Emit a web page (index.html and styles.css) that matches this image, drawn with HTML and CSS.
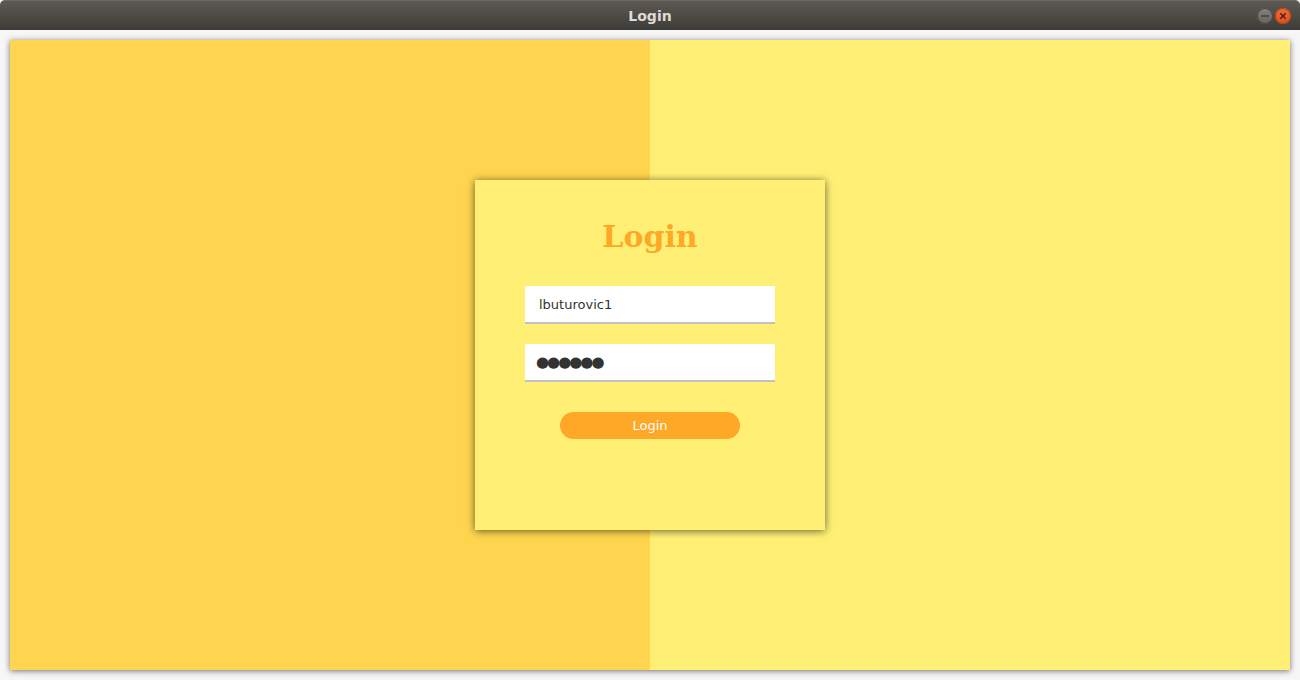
FILE: index.html
```html
<!DOCTYPE html>
<html lang="en">
<head>
<meta charset="utf-8">
<title>Login</title>
<link rel="stylesheet" href="styles.css">
</head>
<body>
<div class="window">
  <header class="titlebar">
    <span class="title">Login</span>
    <div class="controls">
      <span class="ctl ctl-min">
        <svg width="16" height="16" viewBox="0 0 16 16"><line x1="4" y1="8" x2="12" y2="8" stroke="#3b3a36" stroke-width="1.3"/></svg>
      </span>
      <span class="ctl ctl-close">
        <svg width="16" height="16" viewBox="0 0 16 16"><path d="M5.3 5.3 L10.7 10.7 M10.7 5.3 L5.3 10.7" stroke="#3d2115" stroke-width="1.3" fill="none"/></svg>
      </span>
    </div>
  </header>
  <div class="frame">
    <main class="panel">
      <div class="halves">
        <div class="half half-left"></div>
        <div class="half half-right"></div>
      </div>
      <section class="card">
        <h1 class="card-title">Login</h1>
        <div class="field">lbuturovic1</div>
        <div class="field field-pass">●●●●●●</div>
        <button class="btn">Login</button>
      </section>
    </main>
  </div>
</div>
</body>
</html>
```
FILE: styles.css
```css
html, body {
  margin: 0;
  padding: 0;
  width: 1300px;
  height: 680px;
  overflow: hidden;
  background: #f7f7f7;
  font-family: "DejaVu Sans", "Liberation Sans", sans-serif;
}

.window {
  display: flex;
  flex-direction: column;
  height: 680px;
}

.titlebar {
  height: 30px;
  flex: none;
  display: flex;
  align-items: center;
  justify-content: center;
  position: relative;
  background: linear-gradient(#5c5953, #3e3c38);
  border-top: 1px solid #6d6a63;
  box-sizing: border-box;
  border-radius: 5px 5px 0 0;
}

.title {
  color: #dfdbd2;
  font-weight: bold;
  font-size: 14px;
}

.controls {
  position: absolute;
  right: 9px;
  top: 7px;
  display: flex;
  gap: 2px;
}

.ctl {
  width: 16px;
  height: 16px;
  border-radius: 50%;
  display: flex;
}

.ctl-min {
  background: linear-gradient(#85837d, #64625d);
  box-shadow: inset 0 0 0 1px #4a4844;
}

.ctl-close {
  background: linear-gradient(#f26b3a, #de4e1d);
  box-shadow: inset 0 0 0 1px #b0461f;
}

.frame {
  flex: 1;
  padding: 10px;
  background: #f7f7f7;
}

.panel {
  display: grid;
  width: 1280px;
  height: 630px;
  box-shadow: 0 1px 6px rgba(0, 0, 0, 0.55);
}

.halves {
  grid-area: 1 / 1;
  display: flex;
}

.half {
  flex: 1;
}

.half-left {
  background: #ffd54f;
}

.half-right {
  background: #fff075;
}

.card {
  grid-area: 1 / 1;
  place-self: center;
  width: 350px;
  height: 350px;
  box-sizing: border-box;
  padding-top: 37px;
  background: #fff075;
  box-shadow: 0 1px 8px rgba(0, 0, 0, 0.6);
  display: flex;
  flex-direction: column;
  align-items: center;
}

.card-title {
  margin: 0 0 29px;
  font-family: "DejaVu Serif", "Liberation Serif", serif;
  font-weight: bold;
  font-size: 30px;
  line-height: 40px;
  color: #ffa726;
}

.field {
  width: 250px;
  height: 38px;
  box-sizing: border-box;
  background: #ffffff;
  border-bottom: 2px solid #c2c2c2;
  padding-left: 14px;
  display: flex;
  align-items: center;
  font-size: 13px;
  color: #333333;
  margin-bottom: 20px;
}

.field-pass {
  font-size: 15px;
  letter-spacing: -2px;
  padding-left: 11px;
  color: #333333;
  margin-bottom: 30px;
}

.btn {
  width: 180px;
  height: 27px;
  border: none;
  border-radius: 14px;
  background: #ffa726;
  color: #ffffff;
  font-family: "DejaVu Sans", "Liberation Sans", sans-serif;
  font-size: 13px;
  padding: 0;
}
```
